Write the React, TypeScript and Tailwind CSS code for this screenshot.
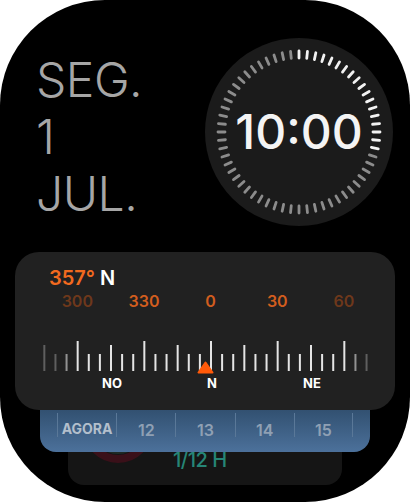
import React from 'react';

const dialTicks = Array.from({ length: 60 }, (_, i) => i);
const compassTicks = Array.from({ length: 30 }, (_, i) => -75 + i * 5);

const degrees = [
  { label: '300', color: 'text-[#6e381b]' },
  { label: '330', color: 'text-[#d25d1e]' },
  { label: '0', color: 'text-[#d25d1e]' },
  { label: '30', color: 'text-[#d25d1e]' },
  { label: '60', color: 'text-[#6e381b]' },
];

const hours = ['AGORA', '12', '13', '14', '15'];

function tickOpacity(d: number) {
  const a = Math.abs(d);
  if (a >= 70) return 0.3;
  if (a >= 65) return 0.55;
  return 0.95;
}

function Dial() {
  return (
    <div className="relative flex h-[188px] w-[188px] items-center justify-center rounded-full bg-[#1b1b1b]">
      <svg className="absolute inset-0" width="188" height="188" viewBox="0 0 188 188">
        {dialTicks.map((i) => (
          <line
            key={i}
            x1="94"
            y1="13"
            x2="94"
            y2="20"
            stroke={i <= 17 ? '#f2f2f2' : '#8c8c8c'}
            strokeWidth="2.8"
            strokeLinecap="round"
            transform={`rotate(${i * 6} 94 94)`}
          />
        ))}
      </svg>
      <span className="relative text-[48px] font-medium leading-none text-[#f4f4f4]">10:00</span>
    </div>
  );
}

function Compass() {
  return (
    <div className="relative z-20 mx-[15px] h-[158px] rounded-[24px] bg-[#212121]">
      <div className="pl-[34px] pt-[14px] text-[20px] font-semibold leading-[24px]">
        <span className="text-[#f26a1f]">357°</span>
        <span className="ml-[5px] text-white">N</span>
      </div>
      <div className="mt-[1px] flex pl-[29px] text-[16px] font-semibold leading-[20px]">
        {degrees.map((d) => (
          <div key={d.label} className={`w-[66.67px] text-center ${d.color}`}>
            {d.label}
          </div>
        ))}
      </div>
      <svg className="mt-[27px] block" width="380" height="36" viewBox="0 0 380 36">
        {compassTicks.map((d) => {
          const x = 196 + d * 2.2222;
          const top = d % 30 === 0 ? 3 : d % 15 === 0 ? 7 : 16;
          return (
            <line
              key={d}
              x1={x}
              y1={top}
              x2={x}
              y2="33"
              stroke="#f0f0f0"
              strokeOpacity={tickOpacity(d)}
              strokeWidth="2"
            />
          );
        })}
        <path
          d="M183.5 34.5 L197.5 34.5 L190.5 24.5 Z"
          fill="#ff5a0a"
          stroke="#ff5a0a"
          strokeWidth="2"
          strokeLinejoin="round"
        />
      </svg>
      <div className="mt-[1px] flex pl-[47px] text-[13px] font-bold leading-[16px] text-white">
        <div className="w-[100px] text-center">NO</div>
        <div className="w-[100px] text-center">N</div>
        <div className="w-[100px] text-center">NE</div>
      </div>
    </div>
  );
}

function Forecast() {
  return (
    <div className="relative z-10 -mt-[20px] ml-[40px] h-[62px] w-[330px] rounded-[16px] bg-gradient-to-b from-[#26425e] to-[#4c719b] pt-[23px]">
      <div className="flex pl-[17px]">
        {hours.map((h, i) => (
          <div
            key={h}
            className={`h-[24px] w-[59.2px] border-l border-[#5a7898] pt-[9px] text-center leading-none ${
              i === 0 ? 'text-[14px] font-bold text-[#b3bfcc]' : 'text-[16px] font-semibold text-[#8fa0b4]'
            } ${i === hours.length - 1 ? 'border-r' : ''}`}
          >
            {h}
          </div>
        ))}
      </div>
    </div>
  );
}

function Sleep() {
  return (
    <div className="relative z-0 -mt-[62px] ml-[68px] flex h-[95px] w-[274px] items-start rounded-[16px] bg-[#151515] pl-[15px] pt-[3px]">
      <svg width="70" height="70" viewBox="0 0 70 70">
        <circle cx="35" cy="35" r="31" fill="none" stroke="#3a1019" strokeWidth="8" />
        <circle cx="35" cy="35" r="22" fill="none" stroke="#1f2a25" strokeWidth="8" />
      </svg>
      <div className="ml-[20px] mt-[57px] text-[20px] font-medium leading-[20px] tracking-[-0.5px] text-[#268576]">
        1/12 H
      </div>
    </div>
  );
}

export default function App() {
  return (
    <div className="h-[502px] w-[410px] bg-white font-['Inter','Noto_Sans',sans-serif]">
      <div className="h-full w-full overflow-hidden rounded-[105px] bg-black">
        <div className="flex items-start justify-between pl-[36px] pr-[17px] pt-[38px]">
          <div className="mt-[13px] text-[48px] font-light leading-[57px] tracking-[-0.5px] text-[#a6a6a6]">
            <div>SEG.</div>
            <div>1</div>
            <div>JUL.</div>
          </div>
          <Dial />
        </div>
        <div className="mt-[26px]">
          <Compass />
          <Forecast />
          <Sleep />
        </div>
      </div>
    </div>
  );
}
